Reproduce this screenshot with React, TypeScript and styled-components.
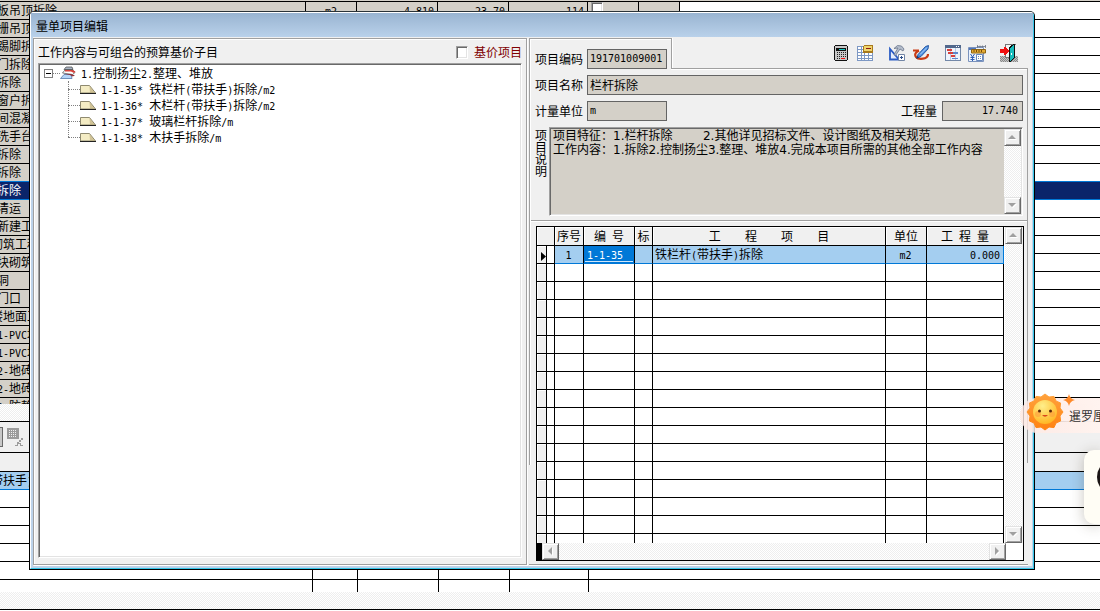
import React from "react";
import styled, { createGlobalStyle, css } from "styled-components";

const CJK = `"Noto Sans CJK SC", sans-serif`;
const HALF = `"DejaVu Sans Mono", "Liberation Mono", monospace`;

const c = {
  face: "#f0f0f0",
  beige: "#d4d0c8",
  shadow: "#a0a0a0",
  dark: "#696969",
  light: "#e3e3e3",
  row: "#a4cef0",
  accent: "#0078d7",
  navy: "#0a246a",
  frame: "#bdd3ea",
  glow: "#35c5e8",
};

const GlobalStyle = createGlobalStyle`
  * { box-sizing: border-box; }
  body { margin: 0; background: #fff; color: #000; font: 12px/16px ${CJK}; overflow: hidden; }
  button, input, textarea { font: inherit; color: inherit; }
  table { border-collapse: separate; border-spacing: 0; table-layout: fixed; width: 100%; }
  th { font-weight: 400; }
`;

const checker = css`
  background: conic-gradient(#eeeeee 25%, #fff 0 50%, #eeeeee 0 75%, #fff 0) 0 0 / 2px 2px;
`;

const etched = css`
  border: 1px solid ${c.shadow};
  box-shadow: 1px 1px 0 #fff, inset 1px 1px 0 #fff;
`;

const sunken = css`
  border: 1px solid;
  border-color: ${c.shadow} #fff #fff ${c.shadow};
  box-shadow: inset 1px 1px 0 ${c.dark}, inset -1px -1px 0 ${c.light};
`;

/* ---------- text ---------- */

const Line = styled.span`
  display: block;
  height: 16px;
  line-height: 16px;
  white-space: pre;
`;

const Half = styled.span`
  font-family: ${HALF};
  font-size: 10px;
  line-height: 10px;
`;

/** Sets half-width runs in a six pixel wide face beside the full-width characters. */
function Txt({ children }: { children: string }) {
  const parts = children.match(/[\x20-\x7e]+|[^\x20-\x7e]+/g) ?? [];
  return (
    <Line>
      {parts.map((p, i) => (/^[\x20-\x7e]/.test(p) ? <Half key={i}>{p}</Half> : p))}
    </Line>
  );
}

/* ---------- background application ---------- */

const Desktop = styled.div`
  position: relative;
  display: flex;
  flex-direction: column;
  height: 100vh;
  overflow: hidden;
`;

const Clip = styled.div`
  flex: 1 1 0;
  min-height: 0;
  overflow: hidden;
`;

const TopEdge = styled.div`
  height: 2px;
  background: ${c.beige};
  border-bottom: 1px solid #000;
`;

const BackCell = styled.td<{ $fill?: string; $line?: string; $align?: string; $open?: boolean }>`
  height: 18px;
  padding: 0 3px;
  overflow: hidden;
  vertical-align: top;
  text-align: ${(p) => p.$align ?? "left"};
  background: ${(p) => p.$fill ?? "#fff"};
  border-bottom: 1px solid ${(p) => p.$line ?? "#000"};
  border-right: ${(p) => (p.$open ? "0" : "1px solid #000")};
`;

const Scrolled = styled.div<{ $by: number; $on?: boolean }>`
  margin-left: ${(p) => -3 - p.$by}px;
  color: ${(p) => (p.$on ? "#fff" : "#000")};
`;

const Strip = styled.div<{ $end?: boolean }>`
  flex: none;
  height: 18px;
  border-bottom: 1px solid #000;
  margin-bottom: ${(p) => (p.$end ? "1px" : "0")};
  ${checker}
`;

const BackTools = styled.div`
  flex: none;
  display: flex;
  align-items: center;
  gap: 4px;
  height: 31px;
  background: ${c.face};
  border-bottom: 1px solid #000;
`;

const BackField = styled.div`
  width: 3px;
  height: 20px;
  border: 1px solid ${c.dark};
  border-left: 0;
  background: #c8c8c8;
`;

const LowerClip = styled.div`
  flex: none;
  height: 139px;
  overflow: hidden;
`;

const LowerHead = styled.div`
  height: 19px;
  background: ${c.face};
  border-bottom: 1px solid #000;
`;

const Check = styled.input`
  appearance: none;
  display: block;
  margin: 0;
  width: 12px;
  height: 13px;
  background: #fff;
  ${sunken}
`;

const names: [string, number][] = [
  ["板吊顶拆除", 3], ["栅吊顶拆除", 3], ["踢脚拆除", 3], ["门拆除", 3], ["拆除", 3], ["窗户拆除", 3],
  ["间混凝土", 3], ["洗手台拆除", 3], ["拆除", 3], ["拆除", 3], ["拆除", 3], ["清运", 3], ["新建工程", 3],
  ["砌筑工程", 9], ["块砌筑墙", 3], ["洞", 3], ["门口", 3], ["楼地面工程", 9], ["1-PVC地", 3], ["1-PVC地", 3],
  ["2-地砖", 3], ["2-地砖", 3], ["2-防静电", 3],
];
const SELECTED = 10;
const firstRow = ["m2", "4.810", "23.70", "114"];

function UpperGrid() {
  const rows = Array.from({ length: 60 }, (_, i) => i);
  return (
    <Clip>
      <TopEdge />
      <table>
        <colgroup>
          {[306, 51, 81, 71, 79, 51, 41].map((w, i) => <col key={i} style={{ width: w }} />)}
          <col />
        </colgroup>
        <tbody>
          {rows.map((i) => {
            const on = i === SELECTED;
            const fill = on ? c.navy : c.beige;
            const line = on || i === SELECTED - 1 ? c.accent : "#000";
            const [text, by] = names[i] ?? ["", 0];
            return (
              <tr key={i}>
                <BackCell $fill={fill} $line={line}>
                  <Scrolled $by={by} $on={on}><Txt>{text}</Txt></Scrolled>
                </BackCell>
                {firstRow.map((v, k) => (
                  <BackCell key={k} $fill={fill} $line={line} $align={k ? "right" : "center"}>
                    {i === 0 && <Txt>{v}</Txt>}
                  </BackCell>
                ))}
                <BackCell $fill={fill} $line={line}>
                  {i === 0 && <Check type="checkbox" aria-label="标记" />}
                </BackCell>
                <BackCell $fill={fill} $line={line} />
                <BackCell $fill={on ? c.navy : "#fff"} $line={line} $open />
              </tr>
            );
          })}
        </tbody>
      </table>
    </Clip>
  );
}

function LowerGrid() {
  return (
    <LowerClip>
      <LowerHead />
      <table>
        <colgroup>
          {[313, 45, 81, 71, 79].map((w, i) => <col key={i} style={{ width: w }} />)}
          <col />
        </colgroup>
        <tbody>
          {[0, 1, 2, 3, 4, 5, 6].map((i) => {
            const fill = i === 0 ? c.row : "#fff";
            const line = i === 0 ? c.accent : "#000";
            return (
              <tr key={i}>
                <BackCell $fill={fill} $line={line}>
                  {i === 0 && <Scrolled $by={9}><Txt>带扶手)</Txt></Scrolled>}
                </BackCell>
                {[0, 1, 2, 3].map((k) => <BackCell key={k} $fill={fill} $line={line} />)}
                <BackCell $fill={fill} $line={line} $open />
              </tr>
            );
          })}
        </tbody>
      </table>
    </LowerClip>
  );
}

const GridOffIcon = () => (
  <svg width="17" height="18" viewBox="0 0 17 18" shapeRendering="crispEdges">
    <path d="M0 0h12v11H0z" fill="#9c9c9c" />
    <path d="M2 2.500h8M2 4.500h8M2 6.500h8M2 8.500h8" stroke="#f0f0f0" strokeWidth="1" strokeDasharray="1 1" />
    <path d="M12 11v1h2v-2h2v2h-2v2h-2v1h2v2h2v1h-3v-2h-2v2H8v-1h2v-3h2z" fill="#9c9c9c" />
  </svg>
);

/* ---------- dialog ---------- */

const Dialog = styled.section`
  position: absolute;
  inset: 11px 65px 41px 29px;
  display: flex;
  border: 1px solid #000;
  border-top-color: #2b3338;
  border-radius: 5px 5px 0 0;
  background: ${c.face};
  overflow: hidden;
`;

const Frame = styled.div`
  flex: 1;
  min-width: 0;
  display: flex;
  flex-direction: column;
  border: 1px solid;
  border-color: #fff ${c.glow} ${c.glow} #fff;
`;

const TitleBar = styled.header`
  flex: none;
  height: 24px;
  padding: 0 5px;
  line-height: 25px;
  background: linear-gradient(#99b4d1, #b9d1ea);
`;

const Body = styled.div`
  flex: 1;
  min-height: 0;
  display: flex;
  gap: 2px;
  padding: 1px 4px 1px 0;
  border: solid ${c.frame};
  border-width: 0 1px 2px 2px;
`;

const LeftPanel = styled.div`
  flex: 0 0 494px;
  display: flex;
  flex-direction: column;
  padding: 0 4px 6px 4px;
  ${etched}
`;

const LeftHead = styled.div`
  flex: none;
  display: flex;
  justify-content: space-between;
  align-items: center;
  height: 24px;
  padding-top: 2px;
`;

const PriceOption = styled.label`
  display: flex;
  align-items: center;
  gap: 6px;
  color: #800000;
`;

const Tree = styled.ul`
  flex: 1;
  margin: 0;
  padding: 1px 5px;
  list-style: none;
  background: #fff;
  ${sunken}
`;

const Branch = styled.ul`
  position: relative;
  margin: 0;
  padding: 0 0 0 24px;
  list-style: none;
  &::before {
    content: "";
    position: absolute;
    left: 24px;
    top: 0;
    bottom: 8px;
    border-left: 1px dotted #808080;
  }
`;

const Node = styled.div`
  display: flex;
  align-items: center;
  height: 16px;
`;

const Dots = styled.span<{ $w: number }>`
  width: ${(p) => p.$w}px;
  border-top: 1px dotted #808080;
`;

const NodeText = styled.span`
  padding-left: 5px;
`;

const Expander = styled.button`
  width: 9px;
  height: 9px;
  padding: 0;
  border: 1px solid #808080;
  background: linear-gradient(#000, #000) center / 5px 1px no-repeat #fff;
`;

const StackIcon = () => (
  <svg width="16" height="14" viewBox="0 0 16 14">
    <path d="M4 3.500 6 1h6l1 2.500z" fill="#a9b4c4" stroke="#444" strokeWidth=".7" />
    <path d="M2.500 7 5 4h8l2 2.500-2.500 2z" fill="#fff" stroke="#444" strokeWidth=".7" />
    <path d="M5 4h7.500l3 1.500-1.500 1.500-3-1.500H5z" fill="#d8413a" />
    <path d="M.5 12.500 4 8.500h7l1 4z" fill="#b4d4f7" stroke="#5577aa" strokeWidth=".8" />
    <path d="M5 8h6l4 1.500-2.500 1L10 9z" fill="#8e2f36" />
  </svg>
);

const LeafIcon = () => (
  <svg width="16" height="9" viewBox="0 0 16 9">
    <path d="M.5.5h9l6 7.500H.5z" fill="#f4ecc4" stroke="#8f8a70" />
    <path d="M9.500 1 15 8H10z" fill="#b9a878" opacity=".6" />
    <path d="M0 8.500h16" stroke="#222" />
  </svg>
);

const leaves = [
  "1-1-35* 铁栏杆(带扶手)拆除/m2",
  "1-1-36* 木栏杆(带扶手)拆除/m2",
  "1-1-37* 玻璃栏杆拆除/m",
  "1-1-38* 木扶手拆除/m",
];

const RightPanel = styled.div`
  flex: 1;
  min-width: 0;
  display: flex;
  flex-direction: column;
  border-bottom: 1px solid ${c.shadow};
  box-shadow: 0 1px 0 #fff;
`;

const TopStrip = styled.div`
  flex: none;
  display: flex;
  height: 31px;
`;

const CodeTab = styled.div`
  flex: 0 0 142px;
  display: flex;
  padding: 10px 0 0 5px;
  border: solid ${c.shadow};
  border-width: 1px 0 0 1px;
  box-shadow: inset 1px 1px 0 #fff;
`;

const Toolbar = styled.div`
  flex: 1;
  display: flex;
  justify-content: flex-end;
  align-items: center;
  gap: 8px;
  padding-right: 7px;
  border: solid ${c.shadow};
  border-width: 0 0 1px 1px;
  box-shadow: 0 1px 0 #fff, inset 1px 0 0 #fff;
`;

const ToolGroup = styled.div`
  display: flex;
`;

const ToolButton = styled.button`
  display: grid;
  place-items: center;
  width: 24px;
  height: 24px;
  padding: 0;
  border: 0;
  background: none;
`;

const Main = styled.div`
  flex: 1;
  min-height: 0;
  display: flex;
  flex-direction: column;
  background:
    linear-gradient(${c.shadow}, ${c.shadow}) 0 0 / 1px 396px no-repeat,
    linear-gradient(#fff, #fff) 1px 0 / 1px 396px no-repeat,
    linear-gradient(${c.shadow}, ${c.shadow}) 100% 0 / 1px 394px no-repeat;
`;

const Fields = styled.div`
  flex: none;
  display: flex;
  flex-direction: column;
  gap: 6px;
  margin: 0 1px 0 2px;
  padding: 6px 4px 4px;
  border-bottom: 1px solid ${c.shadow};
  box-shadow: 0 1px 0 #fff;
`;

const FieldRow = styled.div`
  display: flex;
  height: 20px;
`;

const Label = styled.label<{ $w?: number }>`
  width: ${(p) => p.$w ?? 52}px;
  line-height: 20px;
`;

const Spacer = styled.div`
  flex: 1;
`;

const Field = styled.input<{ $w?: number; $half?: boolean; $right?: boolean }>`
  height: 20px;
  width: ${(p) => (p.$w ? `${p.$w}px` : "auto")};
  min-width: 0;
  flex: ${(p) => (p.$w ? "none" : "1")};
  padding: 0 ${(p) => (p.$right ? 4 : 2)}px 2px;
  border: 1px solid #646464;
  border-radius: 0;
  outline: none;
  background: ${c.beige};
  text-align: ${(p) => (p.$right ? "right" : "left")};
  ${(p) => p.$half && css`font-family: ${HALF}; font-size: 10px;`}
`;

const MemoRow = styled.div`
  display: flex;
  gap: 2px;
  height: 89px;
`;

const MemoLabel = styled.label`
  width: 12px;
  padding-top: 2px;
  line-height: 12px;
  word-break: break-all;
`;

const MemoBox = styled.div`
  flex: 1;
  min-width: 0;
  display: flex;
  padding: 1px;
  ${sunken}
`;

const Memo = styled.textarea`
  flex: 1;
  min-width: 0;
  padding: 0 2px;
  border: 0;
  border-radius: 0;
  outline: none;
  resize: none;
  overflow: hidden;
  white-space: pre-wrap;
  background: ${c.beige};
  font-family: "DejaVu Sans", ${CJK};
  line-height: 14px;
`;

/* ---------- scroll bars ---------- */

const Track = styled.div<{ $across?: boolean }>`
  flex: ${(p) => (p.$across ? "1" : "0 0 17px")};
  display: flex;
  flex-direction: ${(p) => (p.$across ? "row" : "column")};
  justify-content: space-between;
  ${checker}
`;

const Arrow = styled.button`
  display: grid;
  place-items: center;
  width: 17px;
  height: 17px;
  padding: 0;
  border: 1px solid;
  border-color: ${c.light} ${c.dark} ${c.dark} ${c.light};
  box-shadow: inset 1px 1px 0 #fff, inset -1px -1px 0 ${c.shadow};
  background: ${c.face};
`;

const arrows = { up: "M0 6 4 2l4 4z", down: "M0 2h8L4 6z", left: "M6 0v8L2 4z", right: "M2 0v8l4-4z" };

function ScrollButton({ to, label }: { to: keyof typeof arrows; label: string }) {
  return (
    <Arrow type="button" aria-label={label}>
      <svg width="9" height="9" viewBox="0 0 9 9">
        <path d={arrows[to]} transform="translate(1 1)" fill="#fff" />
        <path d={arrows[to]} fill="#a0a0a0" />
      </svg>
    </Arrow>
  );
}

/* ---------- item grid ---------- */

const GridArea = styled.div`
  flex: 1;
  min-height: 0;
  display: flex;
  padding: 5px 4px 3px 7px;
`;

const GridBox = styled.div`
  flex: 1;
  min-width: 0;
  display: flex;
  flex-direction: column;
  border: 1px solid #000;
`;

const GridTop = styled.div`
  flex: 1;
  min-height: 0;
  display: flex;
  padding-right: 1px;
`;

const GridClip = styled.div`
  flex: 1;
  min-width: 0;
  overflow: hidden;
  padding-right: 1px;
  background: #fff;
`;

const GridFoot = styled.div`
  flex: none;
  display: flex;
  height: 17px;
`;

const SplitHandle = styled.div`
  width: 5px;
  background: #000;
`;

const Corner = styled.div`
  width: 17px;
  background: #fff;
`;

const Head = styled.th`
  height: 19px;
  padding: 1px 0 0;
  vertical-align: top;
  background: ${c.face};
  border: solid #000;
  border-width: 0 1px 1px 0;
  box-shadow: inset 1px 1px 0 #fff;
`;

const Cell = styled.td<{ $on?: boolean; $focus?: boolean; $align?: string; $end?: boolean }>`
  height: 18px;
  padding: 0 3px 0 2px;
  overflow: hidden;
  vertical-align: top;
  text-align: ${(p) => p.$align ?? "left"};
  border: solid #000;
  border-width: 0 1px 1px 0;
  ${(p) => p.$on && css`background: ${c.row}; border-bottom-color: ${c.accent};`}
  ${(p) => p.$end && p.$on && css`border-right-color: ${c.accent};`}
  ${(p) => p.$focus && css`
    padding-left: 3px;
    color: #fff;
    background: linear-gradient(#cfe6fa, #cfe6fa) 1px 15px / 48px 1px no-repeat ${c.accent};
  `}
`;

const Marker = styled.td`
  padding: 3px 0 0;
  line-height: 0;
  text-align: right;
  background: ${c.face};
  border: solid #000;
  border-width: 0 1px 1px 0;
  box-shadow: inset 1px 1px 0 #fff;
`;

const heads = ["序号", "编 号", "标", "工    程    项    目", "单位", "工 程 量"];

function ItemGrid() {
  return (
    <GridBox>
      <GridTop>
        <GridClip>
          <table>
            <colgroup>
              {[10, 8, 29, 51, 18].map((w, i) => <col key={i} style={{ width: w }} />)}
              <col />
              {[41, 77].map((w, i) => <col key={i} style={{ width: w }} />)}
            </colgroup>
            <thead>
              <tr>
                <Head colSpan={2} />
                {heads.map((h) => <Head key={h}><Txt>{h}</Txt></Head>)}
              </tr>
            </thead>
            <tbody>
              <tr>
                <Marker>
                  <svg width="5" height="9" viewBox="0 0 5 9"><path d="M0 0l5 4.500L0 9z" /></svg>
                </Marker>
                <Cell />
                <Cell $on $align="center"><Txt>1</Txt></Cell>
                <Cell $on $focus><Txt>1-1-35</Txt></Cell>
                <Cell $on />
                <Cell $on><Txt>铁栏杆(带扶手)拆除</Txt></Cell>
                <Cell $on $align="center"><Txt>m2</Txt></Cell>
                <Cell $on $align="right" $end><Txt>0.000</Txt></Cell>
              </tr>
              {Array.from({ length: 50 }, (_, i) => (
                <tr key={i}>
                  <Marker />
                  {[0, 1, 2, 3, 4, 5, 6].map((k) => <Cell key={k} />)}
                </tr>
              ))}
            </tbody>
          </table>
        </GridClip>
        <Track>
          <ScrollButton to="up" label="向上" />
          <ScrollButton to="down" label="向下" />
        </Track>
      </GridTop>
      <GridFoot>
        <SplitHandle />
        <Track $across>
          <ScrollButton to="left" label="向左" />
          <ScrollButton to="right" label="向右" />
        </Track>
        <Corner />
      </GridFoot>
    </GridBox>
  );
}

/* ---------- toolbar drawings ---------- */

const CalculatorIcon = () => (
  <svg width="14" height="16" viewBox="0 0 14 16" shapeRendering="crispEdges">
    <path d="M1 0h12v1h1v14h-1v1H1v-1H0V1h1z" fill="#111" />
    <path d="M1 1h12v14H1z" fill="#c8c8c8" />
    <path d="M2 3h10v3H2z" fill="#111" /><path d="M5 4h6v1H5z" fill="#19c9c4" />
    <path d="M3 7h1v1H3zM5 7h1v1H5zM7 7h1v1H7zM9 7h1v1H9zM11 7h1v1h-1zM3 9h1v1H3zM5 9h1v1H5zM7 9h1v1H7zM9 9h1v1H9zM11 9h1v1h-1zM3 11h1v1H3zM5 11h1v1H5zM7 11h1v1H7zM9 11h1v1H9zM11 11h1v1h-1zM3 13h1v1H3zM5 13h1v1H5z" fill="#222" />
    <path d="M7 13h4v1H7z" fill="#f01010" />
  </svg>
);

const SheetIcon = () => (
  <svg width="16" height="16" viewBox="0 0 16 16" shapeRendering="crispEdges">
    <path d="M0 1h16v15H0z" fill="#7d98c4" />
    <path d="M1 2h3v2H1zM5 2h2v2H5zM1 5h3v2H1zM5 5h2v2H5zM1 8h3v2H1zM5 8h2v2H5zM8 8h3v2H8zM12 8h3v2h-3zM1 11h3v2H1zM5 11h2v2H5zM8 11h3v2H8zM12 11h3v2h-3zM1 14h3v1H1zM5 14h2v1H5zM8 14h3v1H8zM12 14h3v1h-3z" fill="#fff" />
    <path d="M6 1h1V0h9v8H6z" fill="#a87a1c" /><path d="M7 1h8v5H7z" fill="#efd46c" />
    <path d="M9 3h5v1H9z" fill="#8a1b10" />
  </svg>
);

const ToolsIcon = () => (
  <svg width="16" height="16" viewBox="0 0 16 16">
    <path d="M1 4v10.500h9z" fill="#e6eefc" stroke="#2b5cc4" strokeWidth="1.800" />
    <path d="M5 3.500 8.500.5l4 .5 2.500 3-1 2-3-2-4.500 6.500-1.500-1 4-6.500z" fill="#b4bdcb" stroke="#68758c" strokeWidth=".8" />
    <path d="M9.500 9.500h6v6h-6z" fill="#fff" stroke="#7386a6" />
    <path d="M12.500 11v3M11 12.500h3" stroke="#2c4c86" />
  </svg>
);

const PenIcon = () => (
  <svg width="16" height="16" viewBox="0 0 16 16">
    <path d="M0 5.500h6M6 5.500C3 7 1 9 3 12c2 2.500 12 3 12-3" stroke="#c93b14" strokeWidth="2.200" fill="none" />
    <path d="M5 9.500 12.500 1.500 15.500.500 15 4 8 11.500 4 13z" fill="#4d8fe0" stroke="#1d4e9a" strokeWidth=".9" />
    <path d="M7 9.500l7-7" stroke="#bcdcff" />
    <path d="M3 14l1.500-3 1.500 1.500z" fill="#173a72" />
  </svg>
);

const GanttIcon = () => (
  <svg width="16" height="16" viewBox="0 0 16 16" shapeRendering="crispEdges">
    <path d="M0 0h16v16H0z" fill="#7388a8" /><path d="M1 3h14v12H1z" fill="#eef4fc" />
    <path d="M0 0h16v3H0z" fill="#52688c" /><path d="M11 1h1v1h-1zM13 1h1v1h-1z" fill="#fff" />
    <path d="M5 3h1v12H5zM10 3h1v12h-1z" fill="#b8cae4" />
    <path d="M2 4h5v2H2zM3 7h5v2H3zM6 10h4v2H6z" fill="#d6403c" />
    <path d="M8 7h5v2H8zM7 13h6v1H7z" fill="#5b86cc" />
  </svg>
);

const RulerIcon = () => (
  <svg width="18" height="17" viewBox="0 0 18 17">
    <path d="M.5 2.500h15v14H.5z" fill="#eaf2fd" stroke="#7b93bd" />
    <path d="M1 3h7v2H1z" fill="#4e74b8" />
    <path d="M3.500 4.500h14v3.500h-14z" fill="#e3ab35" stroke="#8f6412" />
    <path d="M6 5v2M8.500 5v2M11 5v2M13.500 5v2" stroke="#7a4d08" />
    <path d="M9 1.500h8.500M9.500 0v3M17.500 0v3M12 .5v2M14.500 .5v2" stroke="#6a7486" strokeWidth=".8" />
    <path d="M2.500 9l2 3 2-3M4.500 12v4M2.500 12.500h4M2.500 14.500h4" stroke="#2f5fb8" fill="none" />
    <path d="M8.500 9.500h6v6h-6z" fill="#fff" stroke="#6687bd" />
    <path d="M10 11.500h4M10 13.500h4" stroke="#6687bd" strokeDasharray="1 1" />
  </svg>
);

const ExitIcon = () => (
  <svg width="18" height="18" viewBox="0 0 18 18" shapeRendering="crispEdges">
    <path d="M0 12h18v6H0z" fill="#c4c4c4" />
    <path d="M0 12.500h18M0 14.500h18M0 16.500h18" stroke="#8a8a8a" strokeDasharray="1 1" />
    <path d="M1 13.500h17M1 15.500h17M1 17.500h17" stroke="#8a8a8a" strokeDasharray="1 1" />
    <path d="M5 0h11v1h-1v13H5z" fill="#777" /><path d="M6 1h5v12H6z" fill="#f4f4f4" />
    <path d="M9 3l5-3h1v14l-5 4H9z" fill="#111" /><path d="M10 4l4-3v12l-4 4z" fill="#18bcbc" />
    <path d="M11 9h1v2h-1z" fill="#fff" />
    <path d="M0 5h4V3h1l4 4-4 4H4V9H0z" fill="#f01010" />
  </svg>
);

const tools: { label: string; Icon: () => React.ReactElement }[][] = [
  [{ label: "计算器", Icon: CalculatorIcon }, { label: "表格", Icon: SheetIcon }],
  [{ label: "工具", Icon: ToolsIcon }, { label: "编辑", Icon: PenIcon }],
  [{ label: "进度", Icon: GanttIcon }, { label: "计价", Icon: RulerIcon }],
  [{ label: "退出", Icon: ExitIcon }],
];

const memo = "项目特征：1.栏杆拆除        2.其他详见招标文件、设计图纸及相关规范\n工作内容：1.拆除2.控制扬尘3.整理、堆放4.完成本项目所需的其他全部工作内容";

/* ---------- floating widgets ---------- */

const Weather = styled.aside`
  position: absolute;
  right: 0;
  top: 398px;
  display: flex;
  align-items: center;
  width: 80px;
  height: 35px;
  padding-left: 5px;
  border-radius: 18px 0 0 18px;
  background: linear-gradient(90deg, rgba(255, 232, 226, 0.8), #fff3ef);
  color: #333;
  white-space: nowrap;
`;

const WeatherArt = styled.svg`
  flex: none;
  width: 52px;
  height: 46px;
  margin: -8px -8px 0 0;
`;

const WeatherClip = styled.span`
  flex: 1;
  min-width: 0;
  overflow: hidden;
`;

const Dock = styled.aside`
  position: absolute;
  right: 0;
  top: 450px;
  display: flex;
  justify-content: flex-end;
  align-items: flex-start;
  width: 16px;
  height: 74px;
  padding-top: 14px;
  border-radius: 10px 0 0 10px;
  background: #fffdf5;
  box-shadow: 0 2px 14px rgba(60, 50, 30, 0.28);
`;

const spikes = Array.from({ length: 24 }, (_, i) => {
  const r = i % 2 ? 15.5 : 18;
  const a = (i * Math.PI) / 12;
  return `${(20 + r * Math.sin(a)).toFixed(1)},${(23 - r * Math.cos(a)).toFixed(1)}`;
}).join(" ");

function WeatherPill() {
  return (
    <Weather>
      <WeatherArt viewBox="0 0 52 46">
        <defs>
          <linearGradient id="ray" x1="0" y1="0" x2="0" y2="1">
            <stop offset="0" stopColor="#ffa23c" /><stop offset="1" stopColor="#ff8212" />
          </linearGradient>
          <radialGradient id="face" cx=".4" cy=".25" r=".8">
            <stop offset="0" stopColor="#ffee8a" /><stop offset="1" stopColor="#ffb41f" />
          </radialGradient>
        </defs>
        <polygon points={spikes} fill="url(#ray)" stroke="url(#ray)" strokeWidth="1" strokeLinejoin="round" />
        <circle cx="20" cy="23" r="12" fill="url(#face)" />
        <circle cx="13" cy="25" r="3" fill="#ff9d3c" opacity=".6" />
        <circle cx="27" cy="25" r="3" fill="#ff9d3c" opacity=".6" />
        <circle cx="14.500" cy="22" r="1.500" fill="#5a2508" />
        <circle cx="25.500" cy="22" r="1.500" fill="#5a2508" />
        <path d="M17 26h6q-3 3.500-6 0z" fill="#d9491c" />
        <path d="M44 5q1 5 6 6-5 1-6 6-1-5-6-6 5-1 6-6z" fill="#ff8a2a" />
      </WeatherArt>
      <WeatherClip>暹罗厘普吉</WeatherClip>
    </Weather>
  );
}

export default function App() {
  return (
    <>
      <GlobalStyle />
      <Desktop lang="zh-CN">
        <UpperGrid />
        <Strip />
        <BackTools><BackField /><GridOffIcon /></BackTools>
        <LowerGrid />
        <Strip $end />

        <Dialog role="dialog" aria-labelledby="dialog-title">
          <Frame>
            <TitleBar id="dialog-title">量单项目编辑</TitleBar>
            <Body>
              <LeftPanel>
                <LeftHead>
                  <span>工作内容与可组合的预算基价子目</span>
                  <PriceOption><Check type="checkbox" />基价项目</PriceOption>
                </LeftHead>
                <Tree>
                  <li>
                    <Node>
                      <Expander type="button" aria-label="折叠" />
                      <Dots $w={7} />
                      <StackIcon />
                      <NodeText><Txt>1.控制扬尘2.整理、堆放</Txt></NodeText>
                    </Node>
                    <Branch>
                      {leaves.map((t) => (
                        <li key={t}>
                          <Node><Dots $w={12} /><LeafIcon /><NodeText><Txt>{t}</Txt></NodeText></Node>
                        </li>
                      ))}
                    </Branch>
                  </li>
                </Tree>
              </LeftPanel>

              <RightPanel>
                <TopStrip>
                  <CodeTab>
                    <Label htmlFor="code">项目编码</Label>
                    <Field id="code" $w={80} $half readOnly value="191701009001" />
                  </CodeTab>
                  <Toolbar>
                    {tools.map((g, i) => (
                      <ToolGroup key={i}>
                        {g.map(({ label, Icon }) => (
                          <ToolButton key={label} type="button" aria-label={label}><Icon /></ToolButton>
                        ))}
                      </ToolGroup>
                    ))}
                  </Toolbar>
                </TopStrip>
                <Main>
                  <Fields>
                    <FieldRow>
                      <Label htmlFor="name">项目名称</Label>
                      <Field id="name" readOnly value="栏杆拆除" />
                    </FieldRow>
                    <FieldRow>
                      <Label htmlFor="unit">计量单位</Label>
                      <Field id="unit" $w={80} $half readOnly value="m" />
                      <Spacer />
                      <Label htmlFor="qty" $w={41}>工程量</Label>
                      <Field id="qty" $w={81} $half $right readOnly value="17.740" />
                    </FieldRow>
                    <MemoRow>
                      <MemoLabel htmlFor="memo">项目说明</MemoLabel>
                      <MemoBox>
                        <Memo id="memo" readOnly value={memo} />
                        <Track>
                          <ScrollButton to="up" label="向上" />
                          <ScrollButton to="down" label="向下" />
                        </Track>
                      </MemoBox>
                    </MemoRow>
                  </Fields>
                  <GridArea><ItemGrid /></GridArea>
                </Main>
              </RightPanel>
            </Body>
          </Frame>
        </Dialog>

        <WeatherPill />
        <Dock>
          <svg width="3" height="26" viewBox="0 0 3 26"><ellipse cx="9" cy="13" rx="9" ry="13" fill="#1a1414" /></svg>
        </Dock>
      </Desktop>
    </>
  );
}
